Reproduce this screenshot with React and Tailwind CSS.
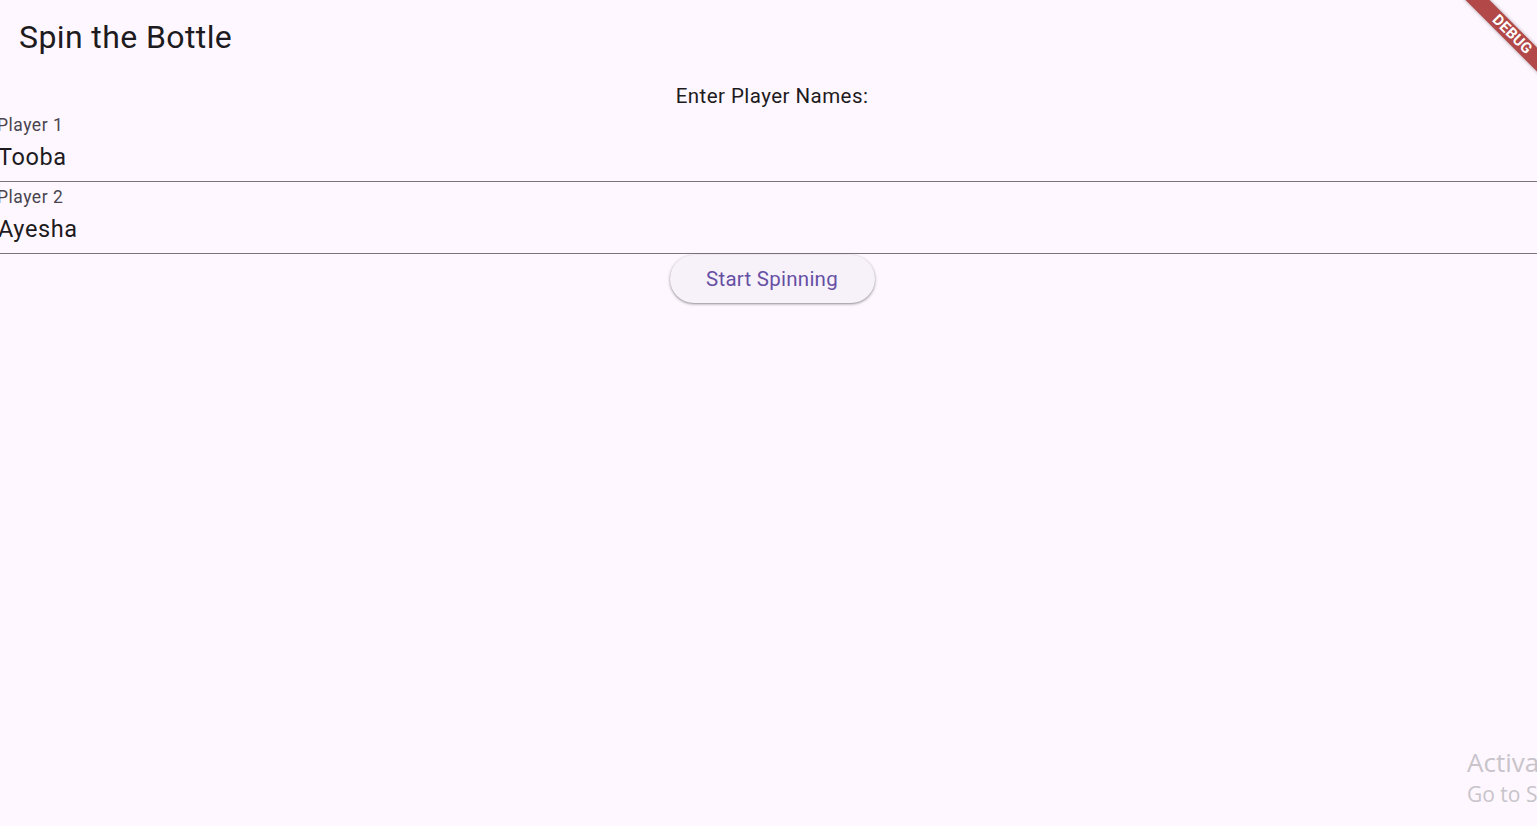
import React from "react";

export default function App() {
  return (
    <div
      className="relative w-full h-[826px] overflow-hidden bg-[#fef7ff] text-[#1d1b20]"
      style={{ fontFamily: "Roboto, 'Liberation Sans', sans-serif" }}
    >
      <header className="h-[73px] flex items-center pl-[19px]">
        <h1 className="text-[32px] leading-none font-normal tracking-[0.4px]">Spin the Bottle</h1>
      </header>

      <main className="w-[1544px] flex flex-col items-center">
        <div className="h-[40px] pt-[6px] flex items-center text-[20.5px] leading-[28px] tracking-[0.45px]">
          Enter Player Names:
        </div>

        <div className="w-full h-[69px] border-b border-[#79747e] flex flex-col pt-[2px]">
          <span className="-ml-[3px] text-[17.5px] leading-[20px] text-[#49454f] tracking-[0.5px]">Player 1</span>
          <span className="-ml-[2px] mt-[7px] text-[23.5px] leading-[30px] tracking-[0.6px]">Tooba</span>
        </div>
        <div className="w-full h-[72px] border-b border-[#79747e] flex flex-col pt-[5px]">
          <span className="-ml-[3px] text-[17.5px] leading-[20px] text-[#49454f] tracking-[0.5px]">Player 2</span>
          <span className="-ml-[2px] mt-[7px] text-[23.5px] leading-[30px] tracking-[0.6px]">Ayesha</span>
        </div>

        <button className="mt-[1px] h-[48px] w-[205px] rounded-full bg-[#f7f2fa] text-[#6750a4] text-[20.5px] tracking-[0.25px] shadow-[0_1px_2px_rgba(0,0,0,0.3),0_1px_3px_1px_rgba(0,0,0,0.12)]">
          Start Spinning
        </button>
      </main>

      <div
        className="absolute left-[1452px] top-[26px] w-[120px] h-[17px] rotate-45 bg-[#b24848] flex items-center justify-center shadow-[0_0_4px_rgba(0,0,0,0.35)]"
      >
        <span className="text-white font-bold text-[15px] leading-none tracking-[0.2px]">DEBUG</span>
      </div>

      <div
        className="absolute left-[1467px] top-[745px] whitespace-nowrap text-[#c8c4ca]"
        style={{ fontFamily: "'Open Sans', 'Noto Sans', sans-serif" }}
      >
        <div className="text-[26px] leading-[34px]">Activate Windows</div>
        <div className="text-[21px] leading-[30px]">Go to Settings to activate Windows.</div>
      </div>
    </div>
  );
}
